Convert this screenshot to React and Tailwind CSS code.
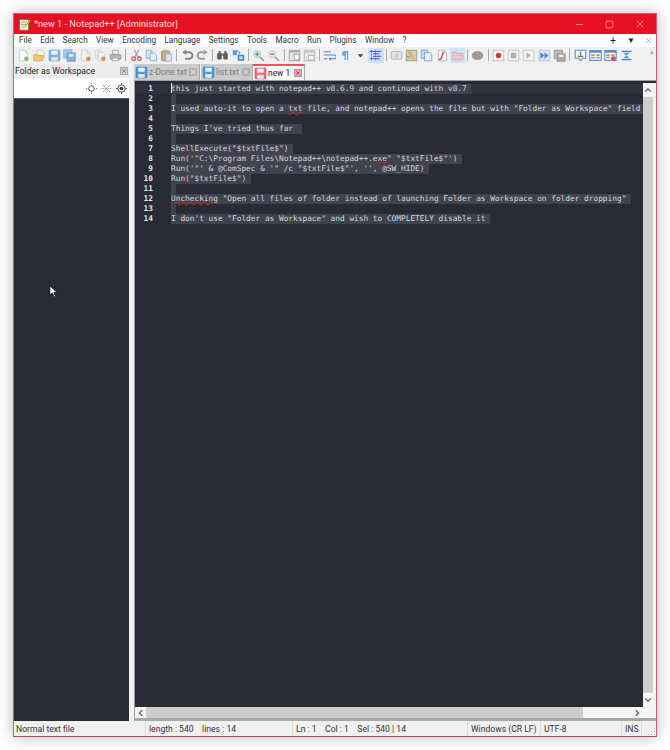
import React from "react";
import { Minus, Square, X } from "lucide-react";

const menus = ["File", "Edit", "Search", "View", "Encoding", "Language", "Settings", "Tools", "Macro", "Run", "Plugins", "Window", "?"];

const Floppy = ({ c = "#6ea6da", d = "#4a86c0" }) => (
  <svg viewBox="0 0 16 16" className="w-[13px] h-[13px] shrink-0">
    <rect x="1.500" y="1.500" width="13" height="13" rx="1" fill={c} stroke={d} />
    <rect x="4" y="2" width="8" height="5" fill="#e8f0fa" />
    <rect x="4" y="10" width="8" height="4.500" fill="#dfe7f0" />
  </svg>
);

const Page = ({ dot, fold = "#fff" }) => (
  <svg viewBox="0 0 16 16" className="w-[13px] h-[13px]">
    <path d="M3 1.500h7l3 3v10H3z" fill={fold} stroke="#c4c8cd" />
    <path d="M10 1.500v3h3" fill="#dde1e6" stroke="#c4c8cd" />
    {dot && <circle cx="11.500" cy="12" r="2.800" fill={dot} />}
  </svg>
);

const Panel = ({ children }) => (
  <svg viewBox="0 0 16 16" className="w-[13px] h-[13px]">{children}</svg>
);

const icons = {
  new: <Page dot="#6cb33f" />,
  open: (
    <Panel>
      <path d="M5 1.500h6l3 3v6H5z" fill="#f4f6fa" stroke="#b8bcc2" />
      <path d="M1 7h4l1 1h7l-1.500 6.500H1z" fill="#f0c05a" stroke="#c99a30" />
    </Panel>
  ),
  save: <Floppy />,
  saveAll: (
    <Panel>
      <rect x="1" y="1" width="10" height="10" fill="#9cc3e6" stroke="#6a9bc9" />
      <rect x="5" y="5" width="10" height="10" fill="#6ea6da" stroke="#4a86c0" />
      <rect x="7" y="6" width="6" height="3.500" fill="#dcebf8" />
    </Panel>
  ),
  close: <Page dot="#ee7a22" fold="#eef0f2" />,
  closeAll: (
    <Panel>
      <path d="M1.500 1.500h6l2 2v8h-8z" fill="#e6e8ea" stroke="#c8cbd0" />
      <path d="M5 4h6l2 2v8.500H5z" fill="#f1f2f4" stroke="#c0c4c8" />
      <circle cx="11.500" cy="12" r="2.800" fill="#ee7a22" />
    </Panel>
  ),
  print: (
    <Panel>
      <path d="M4.500 1.500h7v5h-7z" fill="#eef1f4" stroke="#8b929a" />
      <path d="M1.500 7h13v5.500h-13z" fill="#aab2bb" stroke="#6f7881" />
      <path d="M4 11h8v3.500H4z" fill="#f4f5f6" stroke="#7f868e" />
    </Panel>
  ),
  cut: (
    <Panel>
      <path d="M5 1l5 9M11 1L6 10" stroke="#8d98a6" strokeWidth="1.500" />
      <circle cx="4.500" cy="12" r="2.200" fill="none" stroke="#c9302c" strokeWidth="1.500" />
      <circle cx="11.500" cy="12" r="2.200" fill="none" stroke="#c9302c" strokeWidth="1.500" />
    </Panel>
  ),
  copy: (
    <Panel>
      <path d="M1.500 1.500h7v10h-7z" fill="#d5e4f6" stroke="#6c94c8" />
      <path d="M6.500 5h5l2.500 2.500v7h-7.500z" fill="#e7f0fb" stroke="#6c94c8" />
    </Panel>
  ),
  paste: (
    <Panel>
      <rect x="2" y="2.500" width="10" height="12" rx="1" fill="#c9a36b" stroke="#93703e" />
      <rect x="5" y="1" width="4" height="3" fill="#9aa3ad" />
      <path d="M7 6h7v9H7z" fill="#d9e6f5" stroke="#7c9cc5" />
    </Panel>
  ),
  undo: (
    <Panel>
      <path d="M5 4h5a3.500 3.500 0 0 1 0 8H5" fill="none" stroke="#6f7378" strokeWidth="2.500" />
      <path d="M6.500 0.500v7L1.500 4z" fill="#6f7378" />
    </Panel>
  ),
  redo: (
    <Panel>
      <path d="M11 4H6a3.500 3.500 0 0 0 0 8h5" fill="none" stroke="#8b8f94" strokeWidth="2.500" />
      <path d="M9.500 0.500v7l5-3.500z" fill="#8b8f94" />
    </Panel>
  ),
  find: (
    <Panel>
      <rect x="1.500" y="5" width="5.500" height="8" rx="1.500" fill="#3d4148" />
      <rect x="9" y="5" width="5.500" height="8" rx="1.500" fill="#3d4148" />
      <rect x="6" y="5.500" width="4" height="3" fill="#5f646b" />
      <rect x="3" y="2.500" width="3" height="3" fill="#5f646b" />
      <rect x="10" y="2.500" width="3" height="3" fill="#5f646b" />
    </Panel>
  ),
  replace: (
    <Panel>
      <rect x="1" y="1.500" width="5" height="6" fill="#3f8ed0" />
      <rect x="7" y="7" width="8" height="7.500" fill="#2f7dc0" />
      <rect x="9" y="9" width="4" height="3.500" fill="#bcdcf5" />
      <path d="M6 2l4 2.500L8 7" fill="none" stroke="#2d5f8a" />
    </Panel>
  ),
  zoomIn: (
    <Panel>
      <circle cx="6.500" cy="6.500" r="4.500" fill="#cfe3f5" stroke="#a5bbd0" />
      <path d="M4 6.500h5M6.500 4v5" stroke="#4f9a3e" strokeWidth="1.800" />
      <path d="M10 10l4.500 4.500" stroke="#9a7b4c" strokeWidth="2" />
    </Panel>
  ),
  zoomOut: (
    <Panel>
      <circle cx="6.500" cy="6.500" r="4.500" fill="#dbe8f4" stroke="#b5c6d6" />
      <path d="M4 6.500h5" stroke="#d8493f" strokeWidth="1.800" />
      <path d="M10 10l4.500 4.500" stroke="#a98f6a" strokeWidth="2" />
    </Panel>
  ),
  syncV: (
    <Panel>
      <rect x="1.500" y="1.500" width="13" height="13" fill="#e4e5e6" stroke="#85888c" />
      <rect x="1.500" y="1.500" width="13" height="3" fill="#a4a7ab" />
      <rect x="7.500" y="6.500" width="6" height="7" fill="#fafafa" stroke="#85888c" />
    </Panel>
  ),
  syncH: (
    <Panel>
      <rect x="1.500" y="1.500" width="13" height="13" fill="#e4e5e6" stroke="#a0a3a6" />
      <rect x="1.500" y="1.500" width="13" height="3" fill="#bbbdc0" />
      <rect x="6.500" y="8" width="7" height="5.500" fill="#fafafa" stroke="#a0a3a6" />
    </Panel>
  ),
  wrap: (
    <Panel>
      <path d="M1 3.500h9M1 7.500h13a2 2 0 0 1 0 4.500H8" fill="none" stroke="#2f74c0" strokeWidth="1.300" />
      <path d="M1 12h4" stroke="#5a6068" strokeWidth="1.300" />
      <path d="M9.500 10v4L7 12z" fill="#2f74c0" />
    </Panel>
  ),
  pilcrow: (
    <Panel>
      <path d="M7.500 2.500v11M10.500 2.500v11" stroke="#5b9bd5" strokeWidth="1.600" />
      <path d="M10.500 2.500H6.500a3 3 0 0 0 0 6h1z" fill="#5b9bd5" />
    </Panel>
  ),
  caret: (
    <Panel>
      <path d="M4.500 6.500h7L8 10.500z" fill="#2a2a2a" />
    </Panel>
  ),
  guide: (
    <Panel>
      <path d="M3 1.500v13M8 1.500v13" stroke="#2a35d8" strokeWidth="1" strokeDasharray="1.500 1" />
      <path d="M1 3h14M5 6h8M5 9h10M1 12h12" stroke="#2a35d8" strokeWidth="1.200" />
    </Panel>
  ),
  udl: (
    <Panel>
      <rect x="1.500" y="3" width="13" height="9.500" rx="1" fill="#dce6f0" stroke="#8aa4c0" />
      <path d="M5 8l5-3-2 3h3l-5 4 1.500-4z" fill="#eab03c" />
    </Panel>
  ),
  docMap: (
    <Panel>
      <rect x="1.500" y="1.500" width="13" height="13" fill="#c0cdb0" stroke="#7e8a70" />
      <path d="M4 2l4 6 4 6" stroke="#d8a040" strokeWidth="2.500" fill="none" />
      <path d="M2 9l4 1" stroke="#c25f5f" strokeWidth="1.500" />
    </Panel>
  ),
  docList: (
    <Panel>
      <path d="M1.500 1.500h8v10h-8z" fill="#bdd6f0" stroke="#5b8fc4" />
      <path d="M5.500 4.500h7l2 2v8h-9z" fill="#e2eefa" stroke="#5b8fc4" />
    </Panel>
  ),
  func: (
    <Panel>
      <path d="M3 1.500h7l3 3v10H3z" fill="#fafafa" stroke="#a0a4a8" />
      <path d="M10.500 4C7.500 4 8 6.500 7.500 9S6 13 3.500 13" fill="none" stroke="#c9302c" strokeWidth="1.800" />
    </Panel>
  ),
  folder: (
    <Panel>
      <path d="M1.500 4h5l1 1.500h7v8h-13z" fill="#f5c3c9" stroke="#d99aa4" />
      <path d="M2.500 8h11" stroke="#e6adb5" />
    </Panel>
  ),
  monitor: (
    <Panel>
      <ellipse cx="8" cy="8" rx="7" ry="5.500" fill="#8c8c8c" />
    </Panel>
  ),
  rec: (
    <Panel>
      <rect x="1.500" y="1.500" width="13" height="13" fill="#f8f8f8" stroke="#a9adb2" />
      <circle cx="8" cy="8" r="3.300" fill="#d0141e" />
    </Panel>
  ),
  stop: (
    <Panel>
      <rect x="1.500" y="1.500" width="13" height="13" fill="#f8f8f8" stroke="#b0b3b7" />
      <rect x="4.500" y="4.500" width="7" height="7" fill="#a2a4a8" />
    </Panel>
  ),
  play: (
    <Panel>
      <rect x="1.500" y="1.500" width="13" height="13" fill="#f8f8f8" stroke="#b0b3b7" />
      <path d="M5.500 4v8l5.500-4z" fill="#a2a4a8" />
    </Panel>
  ),
  playMany: (
    <Panel>
      <rect x="1.500" y="1.500" width="13" height="13" fill="#dce4f2" stroke="#a9b6cc" />
      <path d="M3 4v8l5-4zM8 4v8l5-4z" fill="#3f6fd0" />
    </Panel>
  ),
  saveMacro: (
    <Panel>
      <rect x="1.500" y="1.500" width="10" height="10" fill="#b0b2b5" stroke="#85878a" />
      <rect x="5" y="6" width="10" height="9" fill="#9b9da0" stroke="#808285" />
      <rect x="7" y="7" width="6" height="3" fill="#e8e8e8" />
    </Panel>
  ),
  monitorUp: (
    <Panel>
      <path d="M1.500 1.500h13v10h-4l-2.500 3-2.500-3h-4z" fill="#f6f9fd" stroke="#3f78bf" strokeWidth="1.300" />
      <path d="M8 3v5" stroke="#2f8f3f" strokeWidth="1.800" />
      <path d="M4.500 9h7" stroke="#c9302c" strokeWidth="1.500" />
    </Panel>
  ),
  split: (
    <Panel>
      <rect x="1" y="2" width="14" height="12" fill="#f4f7fb" stroke="#3f78bf" strokeWidth="1.300" />
      <rect x="1" y="2" width="14" height="2.500" fill="#3f78bf" />
      <path d="M3 7.500h4M9 7.500h4" stroke="#c9302c" strokeWidth="1.500" />
      <path d="M3 10.500h4M9 10.500h4" stroke="#2f9a4a" strokeWidth="1.500" />
    </Panel>
  ),
  splitDot: (
    <Panel>
      <rect x="1" y="2" width="14" height="12" fill="#f4f7fb" stroke="#3f78bf" strokeWidth="1.300" />
      <rect x="1" y="2" width="14" height="2.500" fill="#3f78bf" />
      <path d="M3 7.500h4M9 7.500h4" stroke="#c9302c" strokeWidth="1.500" />
      <path d="M3 10.500h4" stroke="#2f9a4a" strokeWidth="1.500" />
      <circle cx="11.500" cy="12" r="3" fill="#d0303a" />
    </Panel>
  ),
  compare: (
    <Panel>
      <path d="M2 3h12M2 13h12" stroke="#1f6fb8" strokeWidth="1.500" />
      <path d="M3.500 4.500h9L8 8zM3.500 11.500h9L8 8z" fill="#3f8ed0" />
    </Panel>
  ),
};

const row = [
  "new", "open", "save", "saveAll", "close", "closeAll", "print", "|",
  "cut", "copy", "paste", "|", "undo", "redo", "|", "find", "replace", "|",
  "zoomIn", "zoomOut", "|", "syncV", "syncH", "|", "wrap", "pilcrow", "caret", "guide", "|",
  "udl", "docMap", "docList", "func", "folder", "|", "monitor", "|",
  "rec", "stop", "play", "playMany", "saveMacro", "|", "monitorUp", "split", "splitDot", "compare",
];

function Toolbar() {
  return (
    <div className="flex items-center h-[16px] shrink-0 pl-[2px] bg-[#f0f0f0]">
      {row.map((name, i) =>
        name === "|" ? (
          <div key={i} className="w-[5px] h-[12px] flex justify-center">
            <div className="w-px h-full bg-[#a8a8a8]" />
          </div>
        ) : (
          <div
            key={i}
            className={`w-[15.350px] h-[15px] flex items-center justify-center ${name === "guide" || name === "folder" ? "bg-[#cce4f7]" : ""}`}
          >
            <div className="opacity-85 flex">{icons[name]}</div>
          </div>
        )
      )}
      <span className="ml-[16px] text-[8px] leading-none text-[#5b86bf] -mt-[5px]">»</span>
    </div>
  );
}

function Tab({ name, active, width }) {
  return (
    <div
      className={`flex items-center h-[16px] pl-[1px] pr-[1px] border-r border-[#a8a8a8] ${width} ${active ? "bg-[#fafafa] border-t-2 border-t-[#f0525e]" : "bg-[#cbcbcb]"}`}
    >
      <Floppy c={active ? "#f2727c" : "#4f9bdc"} d={active ? "#d8323f" : "#2f7dc0"} />
      <span className={`ml-[1px] flex-1 text-[8.400px] whitespace-nowrap ${active ? "text-[#222]" : "text-[#7a7a7a]"}`}>{name}</span>
      <div className={`w-[8px] h-[8px] mr-[1px] flex items-center justify-center border ${active ? "bg-[#e3a9b3] border-[#c98a98] text-[#a02040]" : "bg-[#b8b8b8] border-[#aaaaaa] text-[#f0f0f0]"}`}>
        <X size={6} strokeWidth={3} />
      </div>
    </div>
  );
}

const Sel = ({ children }) => (
  <span className="inline-block h-[10px] bg-[#40424f] pr-[4.700px]">{children}</span>
);

const Typo = ({ children }) => (
  <span className="underline decoration-wavy decoration-[#e0202c] decoration-1 underline-offset-[0px]">{children}</span>
);

const lines = [
  "this just started with notepad++ v8.6.9 and continued with v8.7",
  "",
  <>I used auto-it to open a <Typo>txt</Typo> file, and notepad++ opens the file but with "Folder as Workspace" field</>,
  "",
  "Things I've tried thus far ",
  "",
  'ShellExecute("$txtFile$")',
  <>Run('"C:\Program Files\Notepad++\notepad++.<Typo>exe</Typo>" "$txtFile$"')</>,
  `Run('"' & @ComSpec & '" /c "$txtFile$"', '', @SW_HIDE)`,
  'Run("$txtFile$")',
  "",
  <><Typo>Unchecking</Typo> "Open all files of folder instead of launching Folder as Workspace on folder dropping"</>,
  "",
  `I don't use "Folder as Workspace" and wish to COMPLETELY disable it`,
];

function Editor() {
  return (
    <div className="flex-1 min-h-0 bg-[#282a36] pt-[1px] overflow-hidden font-['DejaVu_Sans_Mono',monospace] text-[7.800px] leading-[10px] text-[#d6d6da]">
      {lines.map((line, i) => (
        <div key={i} className={`flex h-[10px] whitespace-pre ${i === 0 ? "bg-[#2f313e]" : ""}`}>
          <div className="w-[18px] shrink-0 text-right text-[#e4e4e8] font-bold">{i + 1}</div>
          <div className="w-[18px] shrink-0" />
          <Sel>{line}</Sel>
        </div>
      ))}
    </div>
  );
}

function Chevron({ d }) {
  return (
    <svg viewBox="0 0 10 10" className="w-[8px] h-[8px]">
      <path d={d} fill="none" stroke="#555" strokeWidth="1.500" />
    </svg>
  );
}

const statusCells = [
  { w: "w-[132px] pl-[2px]", t: "Normal text file" },
  { w: "w-[147px] pl-[3px]", t: "length : 540    lines : 14" },
  { w: "w-[175px] pl-[3px]", t: "Ln : 1    Col : 1    Sel : 540 | 14" },
  { w: "w-[73px] pl-[3px]", t: "Windows (CR LF)" },
  { w: "w-[81px] pl-[3px]", t: "UTF-8" },
  { w: "w-[20px] pl-[3px]", t: "INS" },
];

export default function App() {
  return (
    <div className="w-[670px] h-[750px] bg-white pt-[13px] pl-[13px] font-['Roboto',sans-serif] relative">
      <div className="w-[644px] h-[724px] flex flex-col bg-[#f0f0f0] border border-[#d65a6c] border-b-[#a8495a] shadow-[0_0_14px_rgba(0,0,0,0.28)]">
        {/* title bar */}
        <div className="h-[20px] shrink-0 bg-[#e81123] flex items-center text-[#ffdfe2]">
          <svg viewBox="0 0 16 16" className="w-[13px] h-[13px] ml-[4px]">
            <rect x="2" y="2" width="11" height="13" fill="#f4f4e8" stroke="#5a7a3a" />
            <path d="M4 5h7M4 8h7M4 11h5" stroke="#7aa04a" />
            <path d="M8 10l6-8 1.500 1-6 8z" fill="#e0b030" />
          </svg>
          <span className="ml-[3px] text-[9.200px] leading-none">*new 1 - Notepad++ [Administrator]</span>
          <div className="ml-auto flex items-center text-[#ffe3e6]">
            <div className="w-[30px] flex justify-center"><Minus size={11} strokeWidth={1.200} /></div>
            <div className="w-[30px] flex justify-center"><Square size={9} strokeWidth={1.400} /></div>
            <div className="w-[31px] flex justify-center mr-px"><X size={12} strokeWidth={1.200} /></div>
          </div>
        </div>

        {/* menu */}
        <div className="h-[13px] shrink-0 bg-white flex items-center pl-[5px] gap-[8.400px] text-[8.200px] leading-none text-[#333]">
          {menus.map(m => <span key={m}>{m}</span>)}
          <div className="ml-auto flex items-center text-[#222]">
            <span className="w-[18px] text-center text-[10px]">+</span>
            <span className="w-[18px] text-center text-[8px]">▼</span>
            <span className="w-[16px] flex justify-center text-[#777]"><X size={9} strokeWidth={1.500} /></span>
          </div>
        </div>

        <Toolbar />

        {/* panel + editor */}
        <div className="flex-1 min-h-0 flex pt-[1px]">
          <div className="w-[115px] shrink-0 flex flex-col">
            <div className="h-[14px] shrink-0 flex items-center pl-[1px] pr-[1px] bg-[#ececec] text-[8.600px] text-[#222]">
              <span className="flex-1">Folder as Workspace</span>
              <div className="w-[8px] h-[8px] bg-[#d0d0d0] border border-[#aaaaaa] flex items-center justify-center text-[#555]"><X size={6} strokeWidth={2.500} /></div>
            </div>
            <div className="h-[20px] shrink-0 bg-white flex items-center justify-end pr-[2px] gap-[4px]">
              <svg viewBox="0 0 12 12" className="w-[11px] h-[11px]"><circle cx="6" cy="6" r="3" fill="none" stroke="#555" /><path d="M6 0v3M6 9v3M0 6h3M9 6h3" stroke="#555" strokeDasharray="1 1" /></svg>
              <svg viewBox="0 0 12 12" className="w-[11px] h-[11px]"><path d="M2 2l8 8M10 2l-8 8" stroke="#666" strokeDasharray="1.500 0.800" /><path d="M0 6h12" stroke="#888" strokeDasharray="1 1" /></svg>
              <svg viewBox="0 0 12 12" className="w-[11px] h-[11px]"><circle cx="6" cy="6" r="4" fill="none" stroke="#444" /><circle cx="6" cy="6" r="2" fill="#333" /><path d="M6 0v2M6 10v2M0 6h2M10 6h2" stroke="#444" /></svg>
            </div>
            <div className="flex-1 bg-[#282a36] border-t border-[#555]" />
          </div>

          <div className="w-[5px] shrink-0" />

          <div className="flex-1 min-w-0 flex flex-col">
            <div className="h-[16px] shrink-0 flex">
              <Tab name="z-Done.txt" width="w-[66px]" />
              <Tab name="list.txt" width="w-[52px] ml-[1px]" />
              <Tab name="new 1" active width="w-[52px]" />
            </div>
            <div className="flex-1 min-h-0 flex flex-col pt-[2px] border-t border-[#a0a0a0] border-l border-l-[#a0a0a0] border-b-[3px] border-b-[#a8a8a8] relative bg-[#282a36]">
              <div className="flex-1 min-h-0 flex">
                <Editor />
                <div className="w-[13px] shrink-0 bg-[#f4f4f4] flex flex-col pr-[3px]">
                  <div className="h-[14px] shrink-0 flex items-center justify-center"><Chevron d="M1.500 7L5 3.500 8.500 7" /></div>
                  <div className="flex-1 bg-[#cdcdcd]" />
                  <div className="h-[14px] shrink-0 flex items-center justify-center"><Chevron d="M1.500 3L5 6.500 8.500 3" /></div>
                </div>
              </div>
              <div className="h-[11px] shrink-0 flex bg-[#f4f4f4]">
                <div className="w-[11px] flex items-center justify-center"><Chevron d="M6.500 1.500L3 5l3.500 3.500" /></div>
                <div className="w-[437px] bg-[#cdcdcd]" />
                <div className="flex-1" />
                <div className="w-[12px] mr-[13px] flex items-center justify-center"><Chevron d="M3.500 1.500L7 5l-3.500 3.500" /></div>
              </div>
              {/* caret on line 1 */}
              <div className="absolute left-[36px] top-[2px] w-px h-[10px] bg-[#e8e8e8]" />
            </div>
          </div>
        </div>

        {/* status bar */}
        <div className="h-[15px] shrink-0 flex items-center bg-[#f0f0f0] text-[8.600px] leading-none text-[#333] whitespace-pre">
          {statusCells.map((c, i) => (
            <div key={i} className={`${c.w} h-full flex items-center pt-[1px] border-r border-[#dcdcdc]`}>{c.t}</div>
          ))}
          <svg viewBox="0 0 10 10" className="w-[10px] h-[10px] self-end ml-auto">
            <path d="M8 2h1v1H8zM5 5h1v1H5zM8 5h1v1H8zM2 8h1v1H2zM5 8h1v1H5zM8 8h1v1H8z" fill="#b8b8b8" />
          </svg>
        </div>
      </div>

      {/* mouse pointer */}
      <svg viewBox="0 0 12 18" className="absolute left-[49px] top-[285px] w-[9px] h-[13px]">
        <path d="M1 1v13l3.500-3 2.500 5.500 2-1-2.500-5H11z" fill="#fff" stroke="#000" strokeWidth="1" />
      </svg>
    </div>
  );
}
